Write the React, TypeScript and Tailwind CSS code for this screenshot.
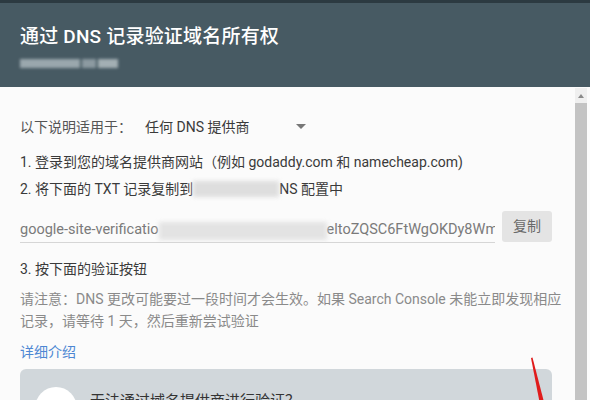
import React from 'react';

const font = { fontFamily: 'Roboto, "Noto Sans CJK SC", sans-serif' };

const Header = () => (
  <header className="shrink-0 h-[87px] bg-[#475a63] border-t-[3px] border-[#2c3a41] px-5 pt-[21px]">
    <h1 className="text-[19px] leading-[26px] font-medium text-white tracking-[0.2px]">
      通过 DNS 记录验证域名所有权
    </h1>
    <div className="mt-[9px] flex gap-[2px] blur-[1.5px]">
      <span className="h-[9px] w-[60px] bg-[#9aa7ad]" />
      <span className="h-[9px] w-[14px] bg-[#8c9aa1]" />
      <span className="h-[9px] w-[20px] bg-[#a3afb4]" />
    </div>
  </header>
);

const Blur = ({ w }: { w: string }) => (
  <span className={`inline-block h-[16px] ${w} bg-[#dedede] blur-[2px] align-middle`} />
);

const Scrollbar = () => (
  <div className="shrink-0 w-[12px] mr-[3px] bg-[#efefef] flex flex-col items-center pt-[5px]">
    <svg width="8" height="6" viewBox="0 0 8 6">
      <path d="M4 1 L7 5 L1 5 Z" fill="#8a8a8a" />
    </svg>
    <div className="mt-[4px] w-full flex-1 bg-[#c3c3c3]" />
  </div>
);

const Body = () => (
  <div className="flex-1 min-w-0 pl-5 pr-[23px] pt-[29px] text-[14px] text-[#3a3a3a] relative">
    <div className="flex items-center h-[20px]">
      <span className="w-[125px] text-[#555]">以下说明适用于：</span>
      <span className="w-[150px]">任何 DNS 提供商</span>
      <svg width="10" height="6" viewBox="0 0 10 6" className="ml-[1px]">
        <path d="M0 0 L10 0 L5 5 Z" fill="#777" />
      </svg>
    </div>
    <p className="mt-[15px] leading-[20px]">1. 登录到您的域名提供商网站（例如 godaddy.com 和 namecheap.com)</p>
    <p className="mt-[7px] leading-[20px] flex items-center whitespace-nowrap">
      2. 将下面的 TXT 记录复制到
      <Blur w="w-[86px]" />
      NS 配置中
    </p>
    <div className="mt-[12px] flex items-start gap-[7px]">
      <div className="w-[475px] h-[32px] border-b border-[#d6d6d6] flex items-end pb-[2px] overflow-hidden whitespace-nowrap text-[14.5px] leading-[20px] text-[#7a7a7a]">
        <span>google-site-verificatio</span>
        <span className="inline-block h-[18px] w-[168px] shrink-0 bg-[#e3e3e3] blur-[2px]" />
        <span>eltoZQSC6FtWgOKDy8Wm</span>
      </div>
      <button className="w-[50px] h-[31px] rounded-[3px] bg-[#e4e4e4] text-[#6a6a6a] text-[14px]">复制</button>
    </div>
    <p className="mt-[16px] leading-[20px]">3. 按下面的验证按钮</p>
    <p className="mt-[9px] leading-[22px] text-[#8a8a8a] whitespace-nowrap">
      请注意：DNS 更改可能要过一段时间才会生效。如果 Search Console 未能立即发现相应
      <br />
      记录，请等待 1 天，然后重新尝试验证
    </p>
    <a className="block mt-[10px] leading-[20px] text-[#4d87d3]">详细介绍</a>
    <div className="mt-[7px] h-[60px] rounded-[6px] bg-[#d1d7db] flex items-start pl-[15px] pt-[18px]">
      <div className="w-[42px] h-[42px] rounded-full bg-white flex items-center justify-center">
        <div className="w-[16px] h-[16px] rounded-full bg-[#555] mt-[8px]" />
      </div>
      <span className="ml-[13px] mt-[3px] text-[15px] text-[#333]">无法通过域名提供商进行验证？</span>
    </div>
    <svg className="absolute left-[528px] top-[268px]" width="22" height="52" viewBox="0 0 22 52">
      <path d="M3 2 L4.5 1.5 L17 50 L12.5 51 Z" fill="#e01b1b" />
    </svg>
  </div>
);

export default function App() {
  return (
    <div className="w-[590px] h-[400px] overflow-hidden bg-[#fbfbfb] flex flex-col" style={font}>
      <Header />
      <main className="flex-1 min-h-0 flex pt-[1px]">
        <Body />
        <Scrollbar />
      </main>
    </div>
  );
}
